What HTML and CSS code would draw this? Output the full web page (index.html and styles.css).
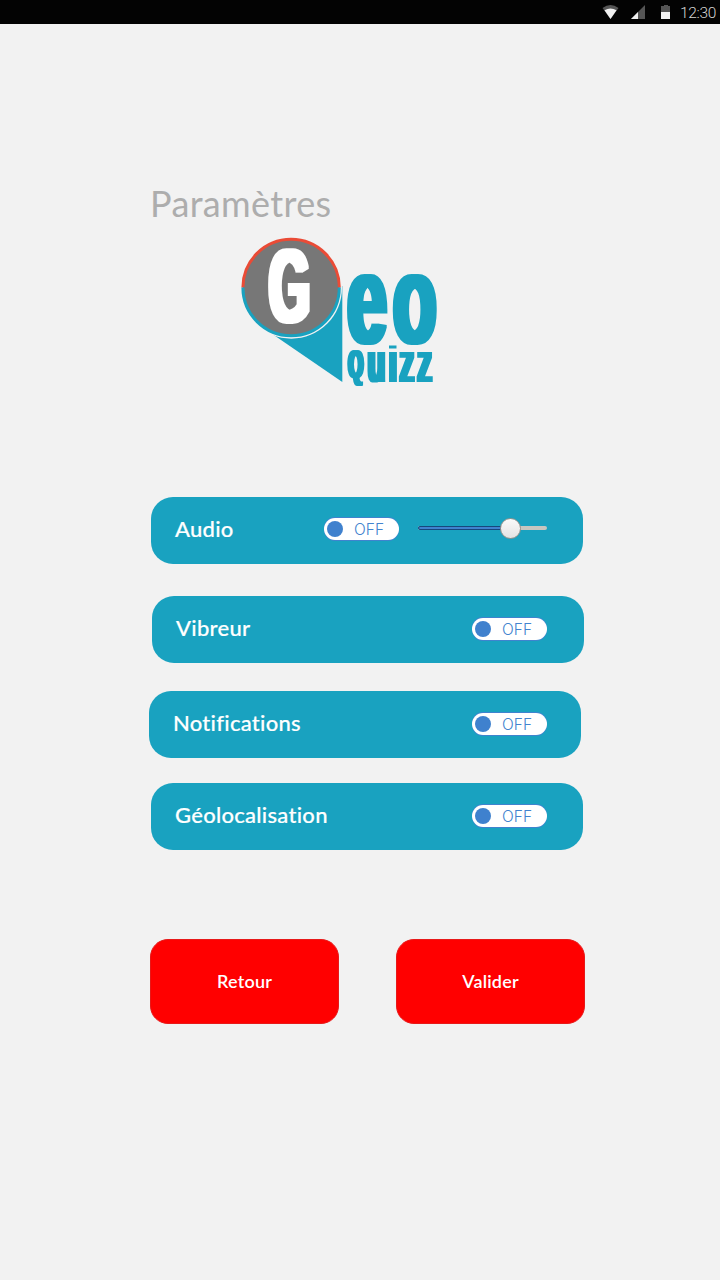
FILE: index.html
```html
<!DOCTYPE html>
<html lang="fr">
<head>
<meta charset="utf-8">
<title>Paramètres</title>
<link rel="stylesheet" href="styles.css">
</head>
<body>
<header class="statusbar">
  <svg class="status-icons" width="72" height="24" viewBox="0 0 72 24">
    <path fill="#555" d="M2.500 8Q10.500 2 18.500 8L10.500 19Z"/>
    <path fill="#f1f1f1" d="M4.500 10.300Q10.500 6.500 16.500 10.300L10.500 19Z"/>
    <path fill="#555" d="M45 5V19H31Z"/>
    <path fill="#f1f1f1" d="M38 12V19H31Z"/>
    <path fill="#555" d="M61 6h3V5h4v1h2v6h-9z"/>
    <path fill="#f1f1f1" d="M61 12h9v7h-9z"/>
  </svg>
  <span class="clock">12:30</span>
</header>
<main class="screen">
  <h1 class="title">Paramètres</h1>
  <svg class="logo" width="200" height="152" viewBox="0 0 200 152">
    <defs>
      <clipPath id="lower"><rect x="100" y="114" width="100" height="37"/></clipPath>
      <filter id="heavy" color-interpolation-filters="sRGB"><feMorphology operator="dilate" radius="3 1"/></filter>
      <filter id="wide" color-interpolation-filters="sRGB"><feMorphology operator="dilate" radius="2 0"/></filter>
    </defs>
    <path class="brand" d="M33 98.500L102.300 146V50Z"/>
    <circle cx="51.300" cy="52" r="50.700" fill="#f2f2f2"/>
    <circle cx="51.100" cy="51.500" r="48.500" fill="#777"/>
    <path d="M2.900 51.500a48.200 48.200 0 0 1 96.400 0" fill="none" stroke="#ea4b36" stroke-width="3"/>
    <path class="brand-line" d="M2.900 51.500a48.200 48.200 0 0 0 96.400 0"/>
    <g filter="url(#heavy)">
      <text class="glyph glyph-g" transform="translate(28.900 85.700) scale(.505 1)" font-size="104">G</text>
      <text class="glyph brand" transform="translate(107.200 106.600) scale(.56 1)" font-size="127" x="0 82">eo</text>
    </g>
    <g filter="url(#wide)">
      <text class="glyph brand" transform="translate(108.500 141.500) scale(.47 1)" font-size="40">Q</text>
    </g>
    <g clip-path="url(#lower)">
      <g filter="url(#wide)">
        <text class="glyph brand" transform="translate(127.800 145.500) scale(.5 1)" font-size="57" x="0 42.400 63.800 99.200">uizz</text>
      </g>
    </g>
    <rect class="brand" x="149" y="109.500" width="7.500" height="3"/>
  </svg>
  <section class="settings">
    <div class="row audio">
      <span class="label">Audio</span>
      <span class="toggle"><i class="knob"></i>OFF</span>
      <span class="slider"><i class="filled"></i><i class="thumb"></i></span>
    </div>
    <div class="row vibration">
      <span class="label">Vibreur</span>
      <span class="toggle"><i class="knob"></i>OFF</span>
    </div>
    <div class="row notifications">
      <span class="label">Notifications</span>
      <span class="toggle"><i class="knob"></i>OFF</span>
    </div>
    <div class="row location">
      <span class="label">Géolocalisation</span>
      <span class="toggle"><i class="knob"></i>OFF</span>
    </div>
  </section>
  <div class="actions">
    <button class="action back">Retour</button>
    <button class="action confirm">Valider</button>
  </div>
</main>
</body>
</html>
```
FILE: styles.css
```css
* { box-sizing: border-box; }
body { margin: 0; background: #f2f2f2; min-height: 1280px; font-family: Lato, sans-serif; }
.statusbar { height: 24px; background: #030303; display: flex; justify-content: flex-end; padding-right: 3px; }
.status-icons { margin-right: 8px; }
.clock { width: 37px; font: 300 15.500px/27px Roboto, sans-serif; color: #d5d5d5; white-space: nowrap; letter-spacing: -.3px; }
.screen { padding: 156px 0 0 150px; }
.title { margin: 0; height: 56px; font-size: 36px; line-height: 46px; font-weight: 400; letter-spacing: .35px; color: #adadad; }
.logo { display: block; margin-left: 90px; }
.brand { fill: #19a2c0; }
.brand-line { fill: none; stroke: #19a2c0; stroke-width: 3; }
.glyph { font-family: "Liberation Sans", sans-serif; font-weight: 700; }
.glyph-g { fill: #fff; }
.settings { padding-top: 109px; }
.row { width: 432px; height: 67px; margin-left: 1px; padding: 0 36px 3px 24px; border-radius: 22px; background: #19a2c0; color: #fff; display: flex; align-items: center; }
.vibration { margin: 32px 0 28px 2px; padding-right: 37px; }
.notifications { margin: 0 0 25px -1px; padding-right: 34px; }
.label { flex: 1; padding-bottom: 2px; font-size: 22px; font-weight: 500; letter-spacing: .28px; font-variant-ligatures: none; -webkit-text-stroke: .2px #fff; }
.toggle { width: 75px; height: 22px; border-radius: 11px; background: #fff; box-shadow: 0 1px #3f83cf, 0 -1px #3f83cf; color: #4384cf; display: flex; align-items: center; padding-left: 3px; font: 300 15.500px/23px Inter, sans-serif; }
.vibration .toggle, .notifications .toggle, .location .toggle { margin-top: 2px; }
.knob { width: 16px; height: 16px; margin-right: 11px; border-radius: 50%; background: #3f81ce; }
.slider { position: relative; width: 129px; height: 4px; margin: -2px 0 0 19px; border-radius: 2px; background: #c6c6c0; }
.filled { display: block; width: 84px; height: 4px; background: #3f83cf; border: 1px solid #17477d; border-radius: 2px; }
.thumb { position: absolute; left: 82px; top: -8px; width: 21px; height: 21px; border-radius: 50%; border: 1px solid #96928b; background: linear-gradient(#fafafa, #e3e3e3); }
.actions { display: flex; gap: 57px; padding-top: 89px; }
.action { width: 189px; height: 85px; border: 1px solid #e71919; border-radius: 18px; padding: 0 0 2px; background: #f00; color: #fff; font: 600 18px Lato, sans-serif; letter-spacing: .2px; }
```
